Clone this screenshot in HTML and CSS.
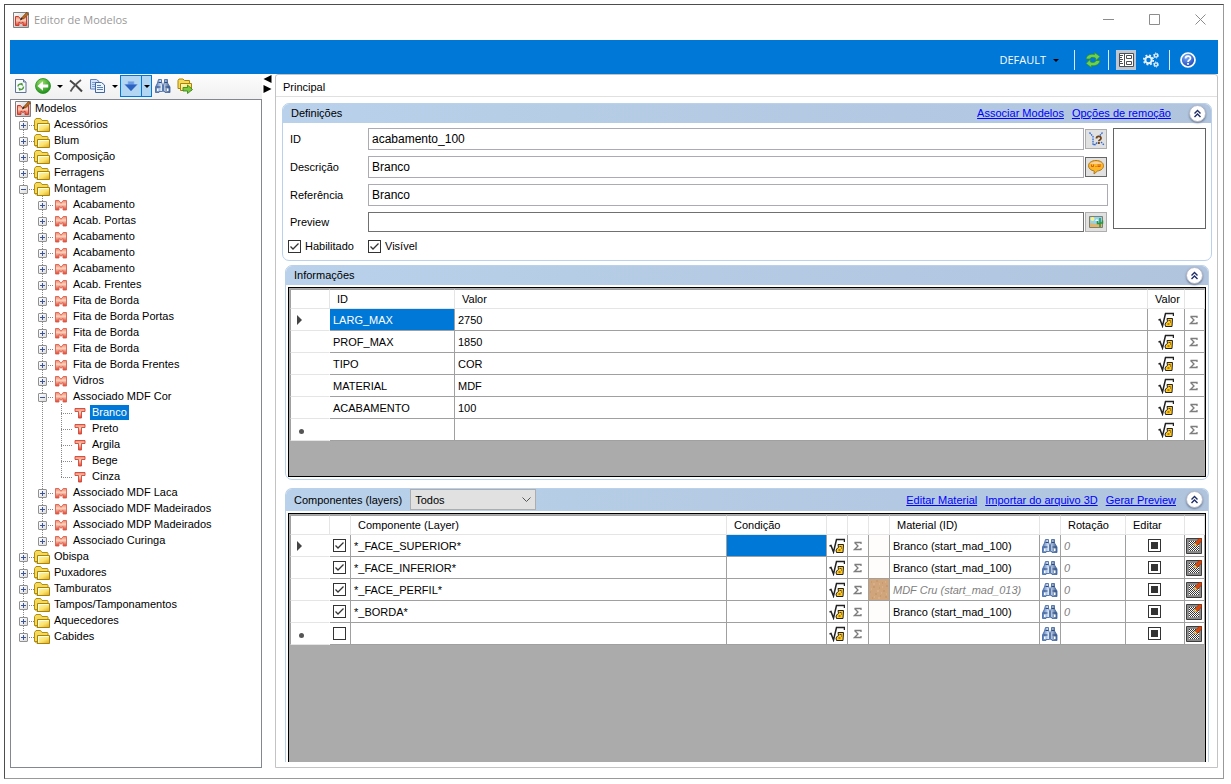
FILE: index.html
```html
<!DOCTYPE html>
<html lang="pt-BR">
<head>
<meta charset="utf-8">
<title>Editor de Modelos</title>
<link rel="stylesheet" href="styles.css">
</head>
<body>
<svg class="defs" aria-hidden="true">
  <defs>
    <linearGradient id="gold" x1="0" y1="0" x2="1" y2="1"><stop offset="0" stop-color="#fffbd0"/><stop offset=".6" stop-color="#fbe36a"/><stop offset="1" stop-color="#d9a520"/></linearGradient>
    <linearGradient id="red" x1="0" y1="0" x2="0" y2="1"><stop offset="0" stop-color="#f0886c"/><stop offset=".4" stop-color="#fbd3bd"/><stop offset="1" stop-color="#e2402c"/></linearGradient>
    <linearGradient id="silver" x1="0" y1="0" x2="1" y2="1"><stop offset="0" stop-color="#ffffff"/><stop offset="1" stop-color="#b5b5b5"/></linearGradient>
    <linearGradient id="steel" x1="0" y1="0" x2="1" y2="0"><stop offset="0" stop-color="#4c76b8"/><stop offset=".45" stop-color="#eaf2fc"/><stop offset="1" stop-color="#36598f"/></linearGradient>
    <radialGradient id="green" cx=".4" cy=".3" r=".7"><stop offset="0" stop-color="#9be06a"/><stop offset="1" stop-color="#1f8f1c"/></radialGradient>
    <radialGradient id="blue" cx=".4" cy=".3" r=".7"><stop offset="0" stop-color="#7fb0ff"/><stop offset="1" stop-color="#1743b8"/></radialGradient>
    <pattern id="checks" width="2" height="2" patternUnits="userSpaceOnUse"><path fill="#fff" d="M0 0h2v2H0z"/><path fill="#333" d="M0 0h1v1H0zM1 1h1v1H1z"/></pattern>
  </defs>
  <symbol id="app" viewBox="0 0 16 16"><path d="M.5.5h15v15H.5z" fill="url(#silver)" stroke="#808080"/><path d="M2.500 4.500h3L8 7.500l2.500-3h3v9h-3.500V10L8 11.500 6 10v3.500H2.500z" fill="url(#red)" stroke="#cf3a2a"/><path d="M7 8.500l1-3 2 1.500z" fill="#222"/><path d="M8.500 6L13.500.5l2 1.500-5 5z" fill="#c06a1c" stroke="#5b2d08" stroke-width=".6"/></symbol>
  <symbol id="folder" viewBox="0 0 16 16"><path d="M.5 12.500v-9l1.500-2h4.500l1.500 2h5.500l.5 1v8z" fill="#f4d95a" stroke="#b08c10"/><path d="M3.500 14.500v-8h12v8H3l-2-2" fill="url(#gold)" stroke="#a8830c"/><path d="M4.500 13.500V7.500h10" stroke="#fffde0" fill="none"/></symbol>
  <symbol id="m" viewBox="0 0 12 12"><path d="M.5 1.500h3.300L6 4.300l2.200-2.800h3.300v9.500H8V7.500L6 9.300 4 7.500V11H.5z" fill="url(#red)" stroke="#d9604f" stroke-width=".9"/></symbol>
  <symbol id="t" viewBox="0 0 12 12"><path d="M1 1.500h10v3H7.500V11h-3V4.500H1z" fill="url(#red)" stroke="#cf4538" stroke-width=".9"/></symbol>
  <symbol id="refresh" viewBox="0 0 16 16"><path d="M2.500 1.500h8l2.500 2.500v10.500H2.500z" fill="#f7faff" stroke="#5f7397"/><path d="M10.500 1.500V4H13" fill="#c9d8ef" stroke="#5f7397"/><path d="M5 8.500c0-2 2-3 4-2l-.5-1.500M10.500 8.500c0 2.500-2 3.500-4 2.500l.5 1.500" fill="none" stroke="#4c9b35" stroke-width="1.500"/></symbol>
  <symbol id="back" viewBox="0 0 16 16"><circle cx="8" cy="8" r="7.500" fill="url(#green)" stroke="#23901e" stroke-width=".8"/><path d="M2.500 8L8 3.200v3.300h5.200v3H8v3.300z" fill="#fff"/></symbol>
  <symbol id="delete" viewBox="0 0 16 16"><path d="M2 2.500c4 3 8 6.500 12 11" fill="none" stroke="#444" stroke-width="2"/><path d="M13 2C9 5 5 9 2.500 13.500" fill="none" stroke="#555" stroke-width="1.700"/></symbol>
  <symbol id="copy" viewBox="0 0 16 16"><path d="M.5 1.500h6l2.500 2v7.500H.5z" fill="#d5e4f8" stroke="#5c82bd"/><path d="M2 4.500h5M2 6.500h5M2 8.500h4" stroke="#7fa0d2"/><path d="M5.500 4.500h6l3 2.500v7.500h-9z" fill="#eef5ff" stroke="#41659f"/><path d="M7 7.500h4M7 9.500h6M7 11.500h6" stroke="#5580c0"/></symbol>
  <symbol id="down" viewBox="0 0 16 16"><path d="M5 3.500h6v3h3.500L8 13 1.500 6.500H5z" fill="#6c9be4" stroke="#8fb4ec" stroke-width=".7"/><path d="M2 6.500h12L8 13z" fill="#2c62c2"/></symbol>
  <symbol id="find" viewBox="0 0 16 16"><path d="M3.500 1.500h3V4l1 3v6.500h-3.500L4 14.500H.5V9l2-4zM9.500 1.500h3V5l2.500 4v5.500h-5v-1H8.500V7l1-3z" fill="url(#steel)" stroke="#4a6da5" stroke-width=".9"/><path d="M1.500 9h4M10.500 9h4M3.500 4.500h3M9.500 4.500h3" stroke="#2a4a80"/><path d="M2 10.500h1.500V13H2zM12 10.500h1.500V13H12z" fill="#fff"/></symbol>
  <symbol id="move" viewBox="0 0 16 16"><path d="M1 10.500V2.500l1-1.500h4l1.500 1.500h5v8z" fill="#f4d95a" stroke="#a8830c"/><path d="M3.500 12.500v-7h11v7z" fill="url(#gold)" stroke="#a8830c"/><path d="M6 9.500h4.500V7l5 4.500-5 4V13H6z" fill="#79c83e" stroke="#2f7d18" stroke-width=".8"/></symbol>
  <symbol id="sync" viewBox="0 0 16 16"><path d="M1 7c.5-3.500 4-5.500 8.500-4.500V.5L15 4.500l-4 4-.5-2.500C8 5 5.500 5 5 7zM15 8.500c-.5 3.500-4 6-8.500 5v2L1 11.500l4-4 .5 2.500c2.500 1 5 .5 5.500-1.500z" fill="#6fd04e" stroke="#2a8f2a" stroke-width=".7"/></symbol>
  <symbol id="layout" viewBox="0 0 20 20"><path d="M3.500 3.500h14v13h-14zM8.500 3.500v13M10.500 5.500h5v3h-5zM10.500 11.500h5v3h-5z" fill="#fff" stroke="#4a4f57"/><path d="M4 5.500h3M4 7.500h2M4 9.500h3M4 11.500h2M4 13.500h3" stroke="#4a4f57"/></symbol>
  <symbol id="gears" viewBox="0 0 16 16"><g fill="none" stroke="#e8f2fc"><circle cx="5.500" cy="8" r="3.200" stroke-width="2"/><circle cx="5.500" cy="8" r="4.700" stroke-width="1.800" stroke-dasharray="1.850 1.850"/><circle cx="13" cy="3.500" r="1.600" stroke-width="1.300"/><circle cx="13" cy="3.500" r="2.500" stroke-dasharray="1.300 1.300"/><circle cx="13" cy="12.500" r="1.600" stroke-width="1.300"/><circle cx="13" cy="12.500" r="2.500" stroke-dasharray="1.300 1.300"/></g></symbol>
  <symbol id="help" viewBox="0 0 16 16"><circle cx="8" cy="8" r="7" fill="url(#blue)" stroke="#fff" stroke-width="1.700"/><path d="M5.500 6.500c0-3.200 5-3.200 5-.3C10.500 8 8 8 8 10" fill="none" stroke="#fff" stroke-width="1.700"/><path d="M7.100 11h1.800v1.800H7.100z" fill="#fff"/></symbol>
  <symbol id="root" viewBox="0 0 16 16"><path d="M.5 8L2 7.500l2.500 6.500L7.500 1.500h8V4" fill="none" stroke="#222" stroke-width="1.500"/><path d="M9 6.500h5.500L14 14.500H7.500L7 12l1.500-2 1-.5z" fill="#ffc928" stroke="#222"/><path d="M10.500 8.500h2M9.500 12h2M12 10h1" stroke="#5a4100"/></symbol>
  <symbol id="sigma" viewBox="0 0 10 10"><path d="M1.500 1.500h6.500V3M1.500 1.500L5 5 1.500 8.500h6.500V7" fill="none" stroke="#7d7d7d" stroke-width="1.300"/></symbol>
  <symbol id="graph" viewBox="0 0 18 18"><path d="M2.500 2.500l3.500 4v8.500l3-1M15.500 2.500L12 6.500M10 12.500L8 15M14 12l3 3" fill="none" stroke="#2a66d6" stroke-width="1.300" stroke-dasharray="1.600 .8"/><path d="M9.500 8.500c0-2.700 4.500-2.700 4.500-.3 0 1.800-2.200 1.600-2.200 3M10.800 13h2" fill="none" stroke="#70421a" stroke-width="1.800"/></symbol>
  <symbol id="speech" viewBox="0 0 16 16"><path d="M8 1.500c4.500 0 7.500 2.200 7.500 5.200S13 11.500 9.500 12L6 15l.3-3C3 11.500.5 9.500.5 6.700S3.500 1.500 8 1.500z" fill="#fbb724" stroke="#b07a25"/><path d="M2 5C4 1.500 12 1.500 14 5z" fill="#fad19a"/><path d="M3.500 5.500v2h2v-2M7.500 7.500h1M9.500 6h3.500M9.500 7.500h3" fill="none" stroke="#d85a18"/></symbol>
  <symbol id="picture" viewBox="0 0 16 16"><path d="M1.500 2.500h13v11h-13z" fill="#8fd3f2" stroke="#807f70"/><path d="M2 9l6 1 6-1v4H2z" fill="#e2b56e"/><circle cx="4.500" cy="5" r="2" fill="#fff27a"/><path d="M7 7l2-2 1.500 2z" fill="#fff"/><path d="M12 4v9M9.500 7v2.500H12M14.500 6.500V9H12" fill="none" stroke="#2c9440" stroke-width="1.500"/></symbol>
  <symbol id="texture" viewBox="0 0 16 16"><path d="M.5.5h15v15H.5z" fill="#8a8a8a" stroke="#3d3d3d"/><path d="M3 3h10v10H3z" fill="url(#checks)"/><path d="M9 5L13 .5h2.500V3l-4 4.500z" fill="#d8480f" stroke="#8a2c08" stroke-width=".6"/><path d="M7.500 8L9 5l2.500 2.500z" fill="#f8dc84" stroke="#8a6a20" stroke-width=".4"/></symbol>
  <symbol id="chev" viewBox="0 0 9 9"><path d="M1.500 4.500l3-3 3 3M1.500 8l3-3 3 3" fill="none" stroke="#1d2c66" stroke-width="1.400"/></symbol>
  <symbol id="mdf" viewBox="0 0 20 21"><path fill="#d0a57c" d="M0 0h20v21H0z"/><path d="M2 3h1M7 2h2M13 4h1M17 7h2M4 8h2M10 9h1M14 12h2M1 13h1M6 15h2M11 17h1M16 18h2M3 19h1" stroke="#bf8f62"/><path d="M4 5h2M10 5h1M16 3h1M8 12h2M2 10h1M17 15h1M12 14h1M5 18h1M9 19h2M13 8h1" stroke="#dfba94"/></symbol>
</svg>

<div class="window">
  <header class="titlebar">
    <svg class="i16"><use href="#app"/></svg>
    <h1 class="title">Editor de Modelos</h1>
    <div class="caption-buttons">
      <button class="cap" aria-label="Minimizar"><svg class="cap-icon" viewBox="0 0 11 11"><path d="M0 5.500h11"/></svg></button>
      <button class="cap" aria-label="Maximizar"><svg class="cap-icon" viewBox="0 0 11 11"><path d="M.5.5h10v10H.5z"/></svg></button>
      <button class="cap" aria-label="Fechar"><svg class="cap-icon" viewBox="0 0 11 11"><path d="M.5.5l10 10M10.500.5l-10 10"/></svg></button>
    </div>
  </header>

  <nav class="bluebar">
    <button class="profile">DEFAULT <span class="caret"></span></button>
    <span class="sep"></span>
    <button class="tool spaced" aria-label="Sincronizar"><svg class="i16"><use href="#sync"/></svg></button>
    <span class="sep"></span>
    <button class="tool pressed" aria-label="Layout"><svg class="i20"><use href="#layout"/></svg></button>
    <button class="tool" aria-label="Configurações"><svg class="i16"><use href="#gears"/></svg></button>
    <span class="sep spaced"></span>
    <button class="tool spaced" aria-label="Ajuda"><svg class="i16"><use href="#help"/></svg></button>
  </nav>

  <div class="body">
    <aside class="side">
      <div class="toolbar">
        <button class="tool" aria-label="Atualizar"><svg class="i16"><use href="#refresh"/></svg></button>
        <button class="tool" aria-label="Voltar"><svg class="i16"><use href="#back"/></svg></button>
        <button class="tool" aria-label="Mais opções de voltar"><span class="caret"></span></button>
        <button class="tool" aria-label="Excluir"><svg class="i16"><use href="#delete"/></svg></button>
        <button class="tool" aria-label="Copiar"><svg class="i16"><use href="#copy"/></svg></button>
        <button class="tool" aria-label="Mais opções de copiar"><span class="caret"></span></button>
        <span class="split"><button class="tool split-main" aria-label="Filtrar"><svg class="i16"><use href="#down"/></svg></button><button class="tool split-more" aria-label="Opções de filtro"><span class="caret"></span></button></span>
        <button class="tool" aria-label="Localizar"><svg class="i16"><use href="#find"/></svg></button>
        <button class="tool" aria-label="Mover"><svg class="i16"><use href="#move"/></svg></button>
      </div>
      <div class="tree">
        <div class="row root"><svg class="i16"><use href="#app"/></svg><span class="label">Modelos</span></div>
        <ul class="lv1">
          <li><div class="row"><button class="exp plus" aria-label="Expandir"></button><svg class="i16"><use href="#folder"/></svg><span class="label">Acessórios</span></div></li>
          <li><div class="row"><button class="exp plus" aria-label="Expandir"></button><svg class="i16"><use href="#folder"/></svg><span class="label">Blum</span></div></li>
          <li><div class="row"><button class="exp plus" aria-label="Expandir"></button><svg class="i16"><use href="#folder"/></svg><span class="label">Composição</span></div></li>
          <li><div class="row"><button class="exp plus" aria-label="Expandir"></button><svg class="i16"><use href="#folder"/></svg><span class="label">Ferragens</span></div></li>
          <li><div class="row"><button class="exp" aria-label="Recolher"></button><svg class="i16"><use href="#folder"/></svg><span class="label">Montagem</span></div>
            <ul class="lv2">
              <li><div class="row"><button class="exp plus" aria-label="Expandir"></button><svg class="i12"><use href="#m"/></svg><span class="label">Acabamento</span></div></li>
              <li><div class="row"><button class="exp plus" aria-label="Expandir"></button><svg class="i12"><use href="#m"/></svg><span class="label">Acab. Portas</span></div></li>
              <li><div class="row"><button class="exp plus" aria-label="Expandir"></button><svg class="i12"><use href="#m"/></svg><span class="label">Acabamento</span></div></li>
              <li><div class="row"><button class="exp plus" aria-label="Expandir"></button><svg class="i12"><use href="#m"/></svg><span class="label">Acabamento</span></div></li>
              <li><div class="row"><button class="exp plus" aria-label="Expandir"></button><svg class="i12"><use href="#m"/></svg><span class="label">Acabamento</span></div></li>
              <li><div class="row"><button class="exp plus" aria-label="Expandir"></button><svg class="i12"><use href="#m"/></svg><span class="label">Acab. Frentes</span></div></li>
              <li><div class="row"><button class="exp plus" aria-label="Expandir"></button><svg class="i12"><use href="#m"/></svg><span class="label">Fita de Borda</span></div></li>
              <li><div class="row"><button class="exp plus" aria-label="Expandir"></button><svg class="i12"><use href="#m"/></svg><span class="label">Fita de Borda Portas</span></div></li>
              <li><div class="row"><button class="exp plus" aria-label="Expandir"></button><svg class="i12"><use href="#m"/></svg><span class="label">Fita de Borda</span></div></li>
              <li><div class="row"><button class="exp plus" aria-label="Expandir"></button><svg class="i12"><use href="#m"/></svg><span class="label">Fita de Borda</span></div></li>
              <li><div class="row"><button class="exp plus" aria-label="Expandir"></button><svg class="i12"><use href="#m"/></svg><span class="label">Fita de Borda Frentes</span></div></li>
              <li><div class="row"><button class="exp plus" aria-label="Expandir"></button><svg class="i12"><use href="#m"/></svg><span class="label">Vidros</span></div></li>
              <li><div class="row"><button class="exp" aria-label="Recolher"></button><svg class="i12"><use href="#m"/></svg><span class="label">Associado MDF Cor</span></div>
                <ul class="lv3">
                  <li><div class="row"><svg class="i12"><use href="#t"/></svg><span class="label selected">Branco</span></div></li>
                  <li><div class="row"><svg class="i12"><use href="#t"/></svg><span class="label">Preto</span></div></li>
                  <li><div class="row"><svg class="i12"><use href="#t"/></svg><span class="label">Argila</span></div></li>
                  <li><div class="row"><svg class="i12"><use href="#t"/></svg><span class="label">Bege</span></div></li>
                  <li><div class="row"><svg class="i12"><use href="#t"/></svg><span class="label">Cinza</span></div></li>
                </ul>
              </li>
              <li><div class="row"><button class="exp plus" aria-label="Expandir"></button><svg class="i12"><use href="#m"/></svg><span class="label">Associado MDF Laca</span></div></li>
              <li><div class="row"><button class="exp plus" aria-label="Expandir"></button><svg class="i12"><use href="#m"/></svg><span class="label">Associado MDF Madeirados</span></div></li>
              <li><div class="row"><button class="exp plus" aria-label="Expandir"></button><svg class="i12"><use href="#m"/></svg><span class="label">Associado MDP Madeirados</span></div></li>
              <li><div class="row"><button class="exp plus" aria-label="Expandir"></button><svg class="i12"><use href="#m"/></svg><span class="label">Associado Curinga</span></div></li>
            </ul>
          </li>
          <li><div class="row"><button class="exp plus" aria-label="Expandir"></button><svg class="i16"><use href="#folder"/></svg><span class="label">Obispa</span></div></li>
          <li><div class="row"><button class="exp plus" aria-label="Expandir"></button><svg class="i16"><use href="#folder"/></svg><span class="label">Puxadores</span></div></li>
          <li><div class="row"><button class="exp plus" aria-label="Expandir"></button><svg class="i16"><use href="#folder"/></svg><span class="label">Tamburatos</span></div></li>
          <li><div class="row"><button class="exp plus" aria-label="Expandir"></button><svg class="i16"><use href="#folder"/></svg><span class="label">Tampos/Tamponamentos</span></div></li>
          <li><div class="row"><button class="exp plus" aria-label="Expandir"></button><svg class="i16"><use href="#folder"/></svg><span class="label">Aquecedores</span></div></li>
          <li><div class="row"><button class="exp plus" aria-label="Expandir"></button><svg class="i16"><use href="#folder"/></svg><span class="label">Cabides</span></div></li>
        </ul>
      </div>
    </aside>

    <div class="splitter">
      <svg class="split-arrows" viewBox="0 0 9 18"><path d="M8.500 0v8L.5 4zM.5 10v8l8-4z"/></svg>
    </div>

    <main class="panel">
      <h2 class="tab">Principal</h2>
      <div class="sections">
        <section class="group">
          <header class="group-head">
            <h3 class="group-title">Definições</h3>
            <div class="links"><a href="#">Associar Modelos</a><a href="#">Opções de remoção</a></div>
            <button class="collapse" aria-label="Recolher"><svg class="i9"><use href="#chev"/></svg></button>
          </header>
          <div class="form">
            <div class="fields">
              <div class="field"><label for="f-id">ID</label><input class="text" id="f-id" type="text" value="acabamento_100"><button class="side-btn" aria-label="Verificar ID"><svg class="i18"><use href="#graph"/></svg></button></div>
              <div class="field"><label for="f-desc">Descrição</label><input class="text" id="f-desc" type="text" value="Branco"><button class="side-btn dark" aria-label="Traduções"><svg class="i16"><use href="#speech"/></svg></button></div>
              <div class="field"><label for="f-ref">Referência</label><input class="text" id="f-ref" type="text" value="Branco"></div>
              <div class="field short"><label for="f-prev">Preview</label><input class="text" id="f-prev" type="text" value=""><button class="side-btn" aria-label="Escolher imagem"><svg class="i16"><use href="#picture"/></svg></button></div>
              <div class="checks">
                <label class="check-label"><input class="check" type="checkbox" checked>Habilitado</label>
                <label class="check-label"><input class="check" type="checkbox" checked>Visível</label>
              </div>
            </div>
            <div class="thumb"></div>
          </div>
        </section>

        <section class="group inset">
          <header class="group-head">
            <h3 class="group-title">Informações</h3>
            <button class="collapse" aria-label="Recolher"><svg class="i9"><use href="#chev"/></svg></button>
          </header>
          <div class="grid info">
            <table>
              <colgroup><col class="w40"><col class="w125"><col><col class="w37"><col class="w20"></colgroup>
              <thead><tr><th></th><th>ID</th><th>Valor</th><th>Valor</th><th></th></tr></thead>
              <tbody>
                <tr><td class="rh"><span class="current"></span></td><td class="sel">LARG_MAX</td><td>2750</td><td class="ic"><svg class="i16"><use href="#root"/></svg></td><td class="ic"><svg class="i10"><use href="#sigma"/></svg></td></tr>
                <tr><td class="rh"></td><td>PROF_MAX</td><td>1850</td><td class="ic"><svg class="i16"><use href="#root"/></svg></td><td class="ic"><svg class="i10"><use href="#sigma"/></svg></td></tr>
                <tr><td class="rh"></td><td>TIPO</td><td>COR</td><td class="ic"><svg class="i16"><use href="#root"/></svg></td><td class="ic"><svg class="i10"><use href="#sigma"/></svg></td></tr>
                <tr><td class="rh"></td><td>MATERIAL</td><td>MDF</td><td class="ic"><svg class="i16"><use href="#root"/></svg></td><td class="ic"><svg class="i10"><use href="#sigma"/></svg></td></tr>
                <tr><td class="rh"></td><td>ACABAMENTO</td><td>100</td><td class="ic"><svg class="i16"><use href="#root"/></svg></td><td class="ic"><svg class="i10"><use href="#sigma"/></svg></td></tr>
                <tr><td class="rh"><span class="new"></span></td><td></td><td></td><td class="ic"><svg class="i16"><use href="#root"/></svg></td><td class="ic"><svg class="i10"><use href="#sigma"/></svg></td></tr>
              </tbody>
            </table>
          </div>
        </section>

        <section class="group inset fill">
          <header class="group-head tall">
            <h3 class="group-title"><label for="layers">Componentes (layers)</label></h3>
            <select class="filter" id="layers"><option>Todos</option></select>
            <div class="links"><a href="#">Editar Material</a><a href="#">Importar do arquivo 3D</a><a href="#">Gerar Preview</a></div>
            <button class="collapse" aria-label="Recolher"><svg class="i9"><use href="#chev"/></svg></button>
          </header>
          <div class="grid">
            <table>
              <colgroup><col class="w40"><col class="w21"><col><col class="w100"><col class="w21"><col class="w21"><col class="w21"><col class="w150"><col class="w21"><col class="w65"><col class="w59"><col class="w20"></colgroup>
              <thead><tr><th></th><th></th><th>Componente (Layer)</th><th>Condição</th><th></th><th></th><th></th><th>Material (ID)</th><th></th><th>Rotação</th><th>Editar</th><th></th></tr></thead>
              <tbody>
                <tr><td class="rh"><span class="current"></span></td><td class="ic"><input class="check" type="checkbox" aria-label="Ativo" checked></td><td>*_FACE_SUPERIOR*</td><td class="sel"></td><td class="ic"><svg class="i16"><use href="#root"/></svg></td><td class="ic"><svg class="i10"><use href="#sigma"/></svg></td><td class="swatch white"></td><td>Branco (start_mad_100)</td><td class="ic"><svg class="i16"><use href="#find"/></svg></td><td class="dim">0</td><td class="ic"><input class="check mixed" type="checkbox" aria-label="Editar"></td><td class="ic"><svg class="i16"><use href="#texture"/></svg></td></tr>
                <tr><td class="rh"></td><td class="ic"><input class="check" type="checkbox" aria-label="Ativo" checked></td><td>*_FACE_INFERIOR*</td><td></td><td class="ic"><svg class="i16"><use href="#root"/></svg></td><td class="ic"><svg class="i10"><use href="#sigma"/></svg></td><td class="swatch white"></td><td>Branco (start_mad_100)</td><td class="ic"><svg class="i16"><use href="#find"/></svg></td><td class="dim">0</td><td class="ic"><input class="check mixed" type="checkbox" aria-label="Editar"></td><td class="ic"><svg class="i16"><use href="#texture"/></svg></td></tr>
                <tr><td class="rh"></td><td class="ic"><input class="check" type="checkbox" aria-label="Ativo" checked></td><td>*_FACE_PERFIL*</td><td></td><td class="ic"><svg class="i16"><use href="#root"/></svg></td><td class="ic"><svg class="i10"><use href="#sigma"/></svg></td><td class="swatch"><svg class="mdf"><use href="#mdf"/></svg></td><td class="dim">MDF Cru (start_mad_013)</td><td class="ic"><svg class="i16"><use href="#find"/></svg></td><td class="dim">0</td><td class="ic"><input class="check mixed" type="checkbox" aria-label="Editar"></td><td class="ic"><svg class="i16"><use href="#texture"/></svg></td></tr>
                <tr><td class="rh"></td><td class="ic"><input class="check" type="checkbox" aria-label="Ativo" checked></td><td>*_BORDA*</td><td></td><td class="ic"><svg class="i16"><use href="#root"/></svg></td><td class="ic"><svg class="i10"><use href="#sigma"/></svg></td><td class="swatch white"></td><td>Branco (start_mad_100)</td><td class="ic"><svg class="i16"><use href="#find"/></svg></td><td class="dim">0</td><td class="ic"><input class="check mixed" type="checkbox" aria-label="Editar"></td><td class="ic"><svg class="i16"><use href="#texture"/></svg></td></tr>
                <tr><td class="rh"><span class="new"></span></td><td class="ic"><input class="check" type="checkbox" aria-label="Ativo"></td><td></td><td></td><td class="ic"><svg class="i16"><use href="#root"/></svg></td><td class="ic"><svg class="i10"><use href="#sigma"/></svg></td><td></td><td></td><td class="ic"><svg class="i16"><use href="#find"/></svg></td><td></td><td class="ic"><input class="check mixed" type="checkbox" aria-label="Editar"></td><td class="ic"><svg class="i16"><use href="#texture"/></svg></td></tr>
              </tbody>
            </table>
          </div>
        </section>
      </div>
    </main>
  </div>
</div>
</body>
</html>
```
FILE: styles.css
```css
* { box-sizing: border-box; }

body {
  margin: 0;
  padding: 4px 7px 5px 4px;
  height: 100vh;
  background: #fff;
  color: #000;
  font: 11px/16px "Liberation Sans", Arial, sans-serif;
}

button, input, select { font: inherit; color: inherit; margin: 0; }
button { padding: 0; border: 0; background: none; }
h1, h2, h3 { margin: 0; font: inherit; }
ul { margin: 0; padding: 0; list-style: none; }
svg { display: block; flex: none; }
a { color: #00f; }

.defs { position: absolute; width: 0; height: 0; }
.i9 { width: 9px; height: 9px; }
.i10 { width: 10px; height: 10px; }
.i12 { width: 12px; height: 12px; }
.i16 { width: 16px; height: 16px; }
.i18 { width: 18px; height: 18px; }
.i20 { width: 20px; height: 20px; }

.window {
  display: flex;
  flex-direction: column;
  height: 100%;
  border: 1px solid;
  border-color: #4d4d4d #999 #999 #4d4d4d;
  padding: 0 5px 10px;
}

/* title bar */
.titlebar { display: flex; align-items: center; flex: none; height: 35px; padding: 0 3px 6px; }
.title { flex: 1; padding-left: 5px; color: #999; font: 11px/16px "Open Sans", sans-serif; }
.caption-buttons { display: flex; }
.cap { display: grid; place-items: center; width: 46px; height: 28px; }
.caption-buttons .cap:last-child { width: 30px; margin-left: 8px; }
.cap-icon { width: 11px; height: 11px; fill: none; stroke: #8c8c8c; }

/* command bar */
.bluebar {
  display: flex;
  align-items: center;
  justify-content: flex-end;
  gap: 7px;
  flex: none;
  height: 34px;
  padding: 6px 22px 0 0;
  background: #0078d7;
}
.profile { display: flex; align-items: center; gap: 7px; margin-right: 8px; color: #fff; font: 11px/16px "Open Sans", sans-serif; }
.sep { width: 1px; height: 20px; background: #dbe9f6; }
.bluebar .spaced { margin-left: 3px; }
.pressed { background: #bcc7d3; }
.caret { display: block; border: 3px solid transparent; border-top-color: #000; border-bottom: 0; }
.tool { display: grid; place-items: center; }

/* left side */
.body { display: flex; flex: 1; min-height: 0; }
.side { display: flex; flex-direction: column; flex: none; width: 252px; }
.toolbar {
  display: flex;
  align-items: center;
  gap: 6px;
  flex: none;
  height: 25px;
  padding: 0 0 1px 3px;
  background: linear-gradient(#fdfdfd, #f0f0f0);
}
.toolbar .caret { margin: 0 -1px 0 0; }
.split { display: flex; height: 22px; margin: 0 -3px; border: 1px solid #0078d7; background: #b3d7f3; }
.split-main { width: 20px; }
.split-more { width: 10px; border-left: 1px solid #0078d7; }

.tree { flex: 1; min-height: 0; padding: 0 0 0 4px; border: 1px solid #828790; overflow: hidden; }
.row { display: flex; align-items: center; height: 16px; }
.root { gap: 2px; }
.root svg, .lv1 svg { margin-top: 2px; }
.label { padding: 0 2px; white-space: nowrap; line-height: 15px; }
.selected { background: #0078d7; color: #fff; }
.lv1 { padding-left: 4px; }
.lv2, .lv3 { padding-left: 19px; }
.tree li {
  background: repeating-linear-gradient(#888 0 1px, transparent 1px 2px) 4px 0 / 1px 100% no-repeat;
}
.tree li:last-child { background-size: 1px 10px; }
.tree li .row {
  background: repeating-linear-gradient(90deg, #888 0 1px, transparent 1px 2px) 4px 9px / 12px 1px no-repeat;
}
.exp {
  flex: none;
  width: 9px;
  height: 9px;
  margin: 2px 6px 0 0;
  border: 1px solid #919191;
  border-radius: 1px;
  background: linear-gradient(#3a559c, #3a559c) 1px 3px / 5px 1px no-repeat, linear-gradient(135deg, #fff, #ddd);
}
.exp.plus {
  background: linear-gradient(#3a559c, #3a559c) 1px 3px / 5px 1px no-repeat, linear-gradient(#3a559c, #3a559c) 3px 1px / 1px 5px no-repeat, linear-gradient(135deg, #fff, #ddd);
}
.lv1 .label { margin-left: 2px; }
.lv2 .exp { margin-right: 8px; }
.lv2 .label { margin-left: 4px; }
.lv3 .row { padding-left: 17px; }

.splitter { flex: none; width: 13px; padding: 1px 0 0 1px; }
.split-arrows { width: 9px; height: 18px; }

/* right side */
.panel {
  display: flex;
  flex-direction: column;
  flex: 1;
  min-width: 0;
  border: 1px solid #c3c3c3;
  border-radius: 3px 3px 0 0;
}
.tab { flex: none; height: 22px; padding: 4px 7px 0; border-bottom: 1px solid #e0e0e0; }
.sections { display: flex; flex-direction: column; flex: 1; min-height: 0; padding: 6px 5px 5px 6px; }

.group { flex: none; margin-bottom: 4px; border: 1px solid #b9d1ea; border-radius: 7px; overflow: hidden; }
.inset { margin: 0 3px 8px; }
.group-head {
  display: flex;
  align-items: center;
  height: 20px;
  margin: -1px -1px 0;
  padding: 0 6px 0 9px;
  background: linear-gradient(90deg, #b9d1ea, #b0c4de);
}
.tall { height: 23px; }
.inset .group-head { padding-right: 6px; }
.links { display: flex; gap: 8px; margin-left: auto; margin-right: 18px; }
.inset .links { margin-right: 10px; }
.collapse {
  display: grid;
  place-items: center;
  width: 17px;
  height: 17px;
  border: 1px solid #b4b8c6;
  border-radius: 50%;
  background: #fff;
  box-shadow: 0 1px 2px #6b7a94;
}
.group-title + .collapse { margin-left: auto; }

.form { display: flex; gap: 5px; padding: 5px 5px 6px 5px; }
.fields { display: flex; flex-direction: column; flex: 1; gap: 6px; min-width: 0; }
.field { display: flex; align-items: center; height: 22px; }
.field label { flex: none; width: 80px; padding-left: 2px; }
.text { flex: 1; min-width: 0; height: 100%; padding: 0 3px; border: 1px solid #ababb1; border-radius: 0; background: #fff; font-size: 12px; }
.short { height: 20px; }
.short .text { border-color: #707070; }
.side-btn { display: grid; place-items: center; flex: none; width: 22px; height: 20px; margin: 0 1px; border: 1px solid #adadad; background: #e1e1e1; }
.dark { border-color: #666; }
.thumb { flex: none; width: 93px; height: 101px; border: 1px solid #646464; }
.checks { display: flex; height: 16px; }
.check-label { display: flex; align-items: center; gap: 4px; width: 80px; }

.check {
  appearance: none;
  display: block;
  flex: none;
  width: 13px;
  height: 13px;
  border: 1px solid #333;
  border-radius: 0;
  background: #fff;
}
.check:checked {
  background: #fff url("data:image/svg+xml,%3Csvg xmlns='http://www.w3.org/2000/svg' viewBox='0 0 11 11'%3E%3Cpath d='M1.500 5.500l2.500 2.500 5.500-5.500' fill='none' stroke='%23333' stroke-width='1.300'/%3E%3C/svg%3E");
}
.mixed { background: linear-gradient(#333, #333) center / 7px 7px no-repeat #fff; }

.filter {
  appearance: none;
  width: 126px;
  height: 21px;
  margin-left: 8px;
  padding: 0 4px;
  border: 1px solid #adadad;
  border-radius: 0;
  background: #e1e1e1 url("data:image/svg+xml,%3Csvg xmlns='http://www.w3.org/2000/svg' viewBox='0 0 9 6'%3E%3Cpath d='M.5.5l4 4 4-4' fill='none' stroke='%23555'/%3E%3C/svg%3E") right 4px center / 9px 6px no-repeat;
}

/* data grids */
.grid { margin: 2px; padding: 1px 0 0 1px; border: 1px solid #000; background: #ababab; }
.info { padding-bottom: 35px; }
.fill { display: flex; flex-direction: column; flex: 1; min-height: 0; margin-bottom: 0; border-bottom: 0; border-radius: 7px 7px 0 0; }
.fill .group-head { flex: none; }
.fill .grid { flex: 1; min-height: 0; margin-bottom: 0; border-bottom: 0; overflow: hidden; }

table { width: 100%; table-layout: fixed; border-collapse: separate; border-spacing: 0; background: #fff; }
th, td { padding: 0 3px; text-align: left; font-weight: normal; white-space: nowrap; overflow: hidden; }
th { height: 20px; padding: 0 0 0 7px; border: solid #e5e5e5; border-width: 0 1px 1px 0; border-top: 1px solid #a0a0a0; }
td { height: 22px; border: solid #a0a0a0; border-width: 0 1px 1px 0; line-height: 16px; }
.rh { padding-left: 6px; border-color: #e5e5e5; border-right-color: #fff; }
.rh, th:first-child { border-left: 1px solid #a0a0a0; }
.ic { padding: 0 1px 0 0; }
.ic svg, .ic input { margin: 0 auto; }
.sel { background: #0078d7; color: #fff; }
.dim { color: #808080; font-style: italic; }
.swatch { padding: 0; }
.white { background: #fffcfc; }
.mdf { width: 20px; height: 21px; }
.current { display: block; width: 5px; border: 5px solid transparent; border-left-color: #444; border-right: 0; }
.new { display: block; width: 5px; height: 5px; margin: 3px 0 0 2px; border-radius: 50%; background: #555; }

.w20 { width: 20px; }
.w21 { width: 21px; }
.w37 { width: 37px; }
.w40 { width: 40px; }
.w59 { width: 59px; }
.w65 { width: 65px; }
.w100 { width: 100px; }
.w125 { width: 125px; }
.w150 { width: 150px; }
```
